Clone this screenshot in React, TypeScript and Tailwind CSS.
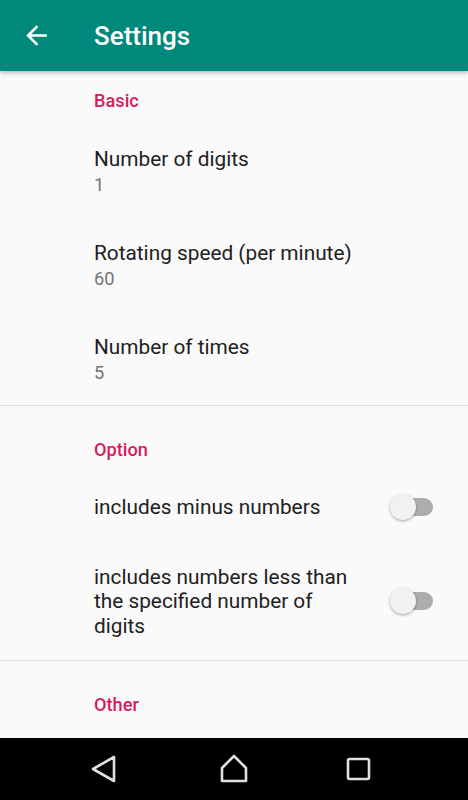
import React from "react";

function BackArrow() {
  return (
    <svg width="31" height="31" viewBox="0 0 24 24" fill="#ffffff">
      <path d="M20 11H7.83l5.59-5.59L12 4l-8 8 8 8 1.41-1.41L7.83 13H20v-2z" />
    </svg>
  );
}

function Category({ title, top }: { title: string; top: string }) {
  return (
    <div className={`${top} pl-[94px] shrink-0`}>
      <div className="text-[18.2px] leading-[24px] font-medium text-[#d81b60]">{title}</div>
    </div>
  );
}

function Item({ title, summary, h }: { title: string; summary: string; h: string }) {
  return (
    <div className={`${h} pl-[94px] pt-[22px] shrink-0`}>
      <div className="text-[20.8px] leading-[26px] text-[#212121]">{title}</div>
      <div className="mt-[1px] text-[18.2px] leading-[24px] text-[#757575]">{summary}</div>
    </div>
  );
}

function Switch() {
  return (
    <div className="relative w-[43px] h-[26px] shrink-0 mr-[35px]">
      <div className="absolute left-[4px] top-[4px] w-[39px] h-[18px] rounded-full bg-[#adadad]" />
      <div className="absolute left-0 top-0 w-[26px] h-[26px] rounded-full bg-[#f1f1f1] shadow-[0_1px_3px_rgba(0,0,0,0.35)]" />
    </div>
  );
}

function SwitchItem({ children, h }: { children: React.ReactNode; h: string }) {
  return (
    <div className={`${h} flex items-center pl-[94px] shrink-0`}>
      <div className="w-[266px] pt-[1px] text-[20.8px] leading-[24.5px] text-[#212121]">{children}</div>
      <div className="ml-auto">
        <Switch />
      </div>
    </div>
  );
}

function NavBar() {
  return (
    <div className="h-[62px] bg-black flex items-center shrink-0">
      <div className="ml-[84px] w-[40px] flex justify-center">
        <svg width="26" height="28" viewBox="0 0 26 28" fill="none" stroke="#e0e0e0" strokeWidth="2.6" strokeLinejoin="round">
          <path d="M23 2 L2 14 L23 26 Z" />
        </svg>
      </div>
      <div className="ml-[90px] w-[40px] flex justify-center">
        <svg width="30" height="30" viewBox="0 0 30 30" fill="none" stroke="#e0e0e0" strokeWidth="2.6" strokeLinejoin="round">
          <path d="M3 27 L3 14 L15 2 L27 14 L27 27 Z" />
        </svg>
      </div>
      <div className="ml-[85px] w-[40px] flex justify-center">
        <svg width="26" height="24" viewBox="0 0 26 24" fill="none" stroke="#e0e0e0" strokeWidth="2.6">
          <rect x="2" y="2" width="21" height="20" rx="1.5" />
        </svg>
      </div>
    </div>
  );
}

export default function App() {
  return (
    <div className="w-full h-[800px] flex flex-col bg-[#fafafa] font-['Roboto','Noto_Sans',sans-serif] overflow-hidden">
      <div className="h-[71px] bg-[#00897b] flex items-center shrink-0 relative z-10 shadow-[0_2px_4px_rgba(0,0,0,0.25)]">
        <div className="w-[31px] ml-[21px] flex items-center">
          <BackArrow />
        </div>
        <div className="ml-[42px] text-[26px] font-medium text-white leading-none">Settings</div>
      </div>

      <div className="flex-1 flex flex-col overflow-hidden">
        <Category title="Basic" top="h-[53px] pt-[18px]" />
        <Item title="Number of digits" summary="1" h="h-[94px]" />
        <Item title="Rotating speed (per minute)" summary="60" h="h-[94px]" />
        <Item title="Number of times" summary="5" h="h-[93px]" />
        <div className="h-px bg-[#dcdcdc] shrink-0" />

        <Category title="Option" top="h-[55px] pt-[32px]" />
        <SwitchItem h="h-[92px]">includes minus numbers</SwitchItem>
        <SwitchItem h="h-[96px]">includes numbers less than the specified number of digits</SwitchItem>
        <div className="h-[11px] shrink-0" />
        <div className="h-px bg-[#dcdcdc] shrink-0" />

        <Category title="Other" top="h-[77px] pt-[32px]" />
      </div>

      <NavBar />
    </div>
  );
}
